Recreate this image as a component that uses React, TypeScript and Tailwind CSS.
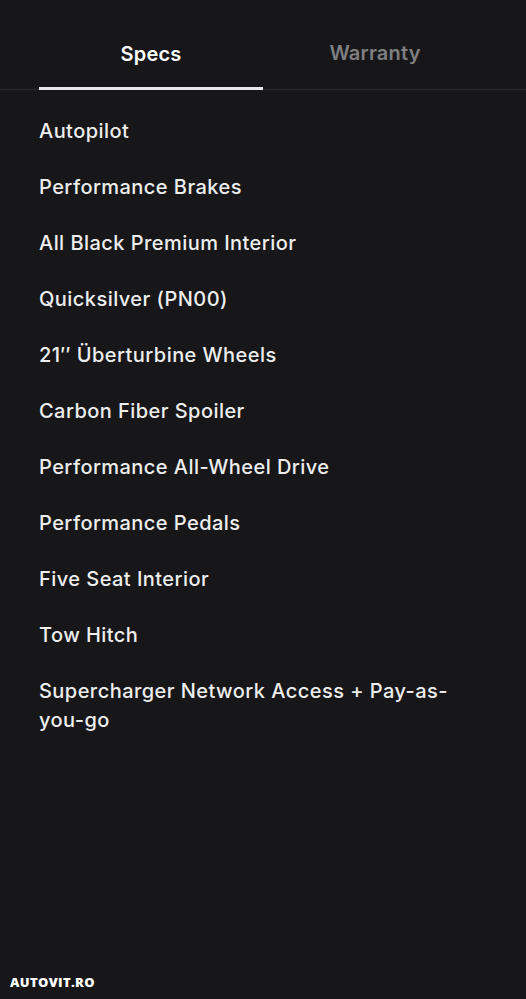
const specs = [
  'Autopilot',
  'Performance Brakes',
  'All Black Premium Interior',
  'Quicksilver (PN00)',
  '21\u2032\u2032 \u00dcberturbine Wheels',
  'Carbon Fiber Spoiler',
  'Performance All-Wheel Drive',
  'Performance Pedals',
  'Five Seat Interior',
  'Tow Hitch',
  'Supercharger Network Access + Pay-as-you-go',
];

export default function App() {
  return (
    <div
      className="relative h-[999px] w-[526px] overflow-hidden bg-[#171719] text-white"
      style={{ fontFamily: 'Inter, "Noto Sans", sans-serif' }}
    >
      <div className="border-b border-[#2c2c2f]">
        <div className="flex px-[39px]">
          <button className="flex h-[89px] flex-1 flex-col items-center justify-end">
            <span className="mb-[19px] text-[20px] font-semibold leading-[28px] tracking-[0.2px] text-white">Specs</span>
            <span className="mb-[-1px] h-[3px] w-full bg-[#e8e8e8]" />
          </button>
          <button className="flex h-[89px] flex-1 flex-col items-center justify-end">
            <span className="mb-[22px] text-[20px] font-semibold leading-[28px] tracking-[0.2px] text-[#7f7f82]">Warranty</span>
          </button>
        </div>
      </div>

      <ul className="flex flex-col gap-[27px] px-[39px] pt-[27px]">
        {specs.map((s) => (
          <li key={s} className="text-[20px] font-medium leading-[29px] tracking-[0.45px] text-[#eeeeee]">
            {s}
          </li>
        ))}
      </ul>

      <div
        className="absolute bottom-[7px] left-[10px] text-[13px] font-extrabold tracking-[0.35px] text-white"
        style={{ fontFamily: '"Open Sans", Inter, sans-serif' }}
      >
        AUTOVIT.RO
      </div>
    </div>
  );
}
